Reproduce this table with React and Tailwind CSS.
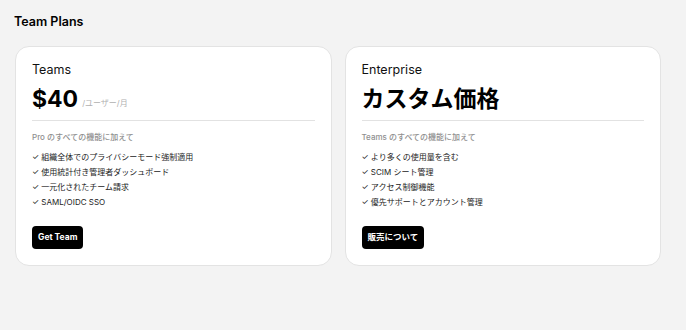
const plans = [
  {
    name: 'Teams',
    price: '$40',
    unit: '/ユーザー/月',
    lead: 'Pro のすべての機能に加えて',
    features: [
      '組織全体でのプライバシーモード強制適用',
      '使用統計付き管理者ダッシュボード',
      '一元化されたチーム請求',
      'SAML/OIDC SSO',
    ],
    cta: 'Get Team',
  },
  {
    name: 'Enterprise',
    price: 'カスタム価格',
    lead: 'Teams のすべての機能に加えて',
    features: [
      'より多くの使用量を含む',
      'SCIM シート管理',
      'アクセス制御機能',
      '優先サポートとアカウント管理',
    ],
    cta: '販売について',
  },
];

const PlanCard = ({ plan }) => (
  <div className="flex h-[220px] flex-col rounded-[14px] border border-[#e3e3e3] bg-white px-4 pt-[15px]">
    <div className="text-[12.5px] leading-[16px] text-[#111]">{plan.name}</div>
    <div className="mt-[7px] flex items-end gap-[4px] pb-[7px] border-b border-[#e2e2e2]">
      <span className="text-[23px] font-bold leading-[28px] text-black">{plan.price}</span>
      {plan.unit && (
        <span className="mb-[5px] text-[8px] leading-[10px] text-[#b0b0b0]">{plan.unit}</span>
      )}
    </div>
    <div className="mt-[10px] text-[8px] font-medium leading-[12px] text-[#8f8f8f]">{plan.lead}</div>
    <ul className="mt-[8px] flex flex-col gap-[3px]">
      {plan.features.map((f) => (
        <li key={f} className="text-[8px] leading-[12px] text-[#222]">
          ✓ {f}
        </li>
      ))}
    </ul>
    <div className="mt-[14px]">
      <button className="h-[23px] rounded-[4px] bg-black px-[6px] text-[8.5px] font-bold text-white">
        {plan.cta}
      </button>
    </div>
  </div>
);

export default function App() {
  return (
    <div
      className="min-h-[330px] bg-[#f3f3f3] pl-[14px] pr-[25px] pt-[14px]"
      style={{ fontFamily: 'Inter, "Noto Sans CJK JP", sans-serif' }}
    >
      <h1 className="text-[12.5px] font-semibold leading-[16px] text-black">Team Plans</h1>
      <div className="ml-px mt-[16px] grid grid-cols-2 gap-[13px]">
        {plans.map((p) => (
          <PlanCard key={p.name} plan={p} />
        ))}
      </div>
    </div>
  );
}
